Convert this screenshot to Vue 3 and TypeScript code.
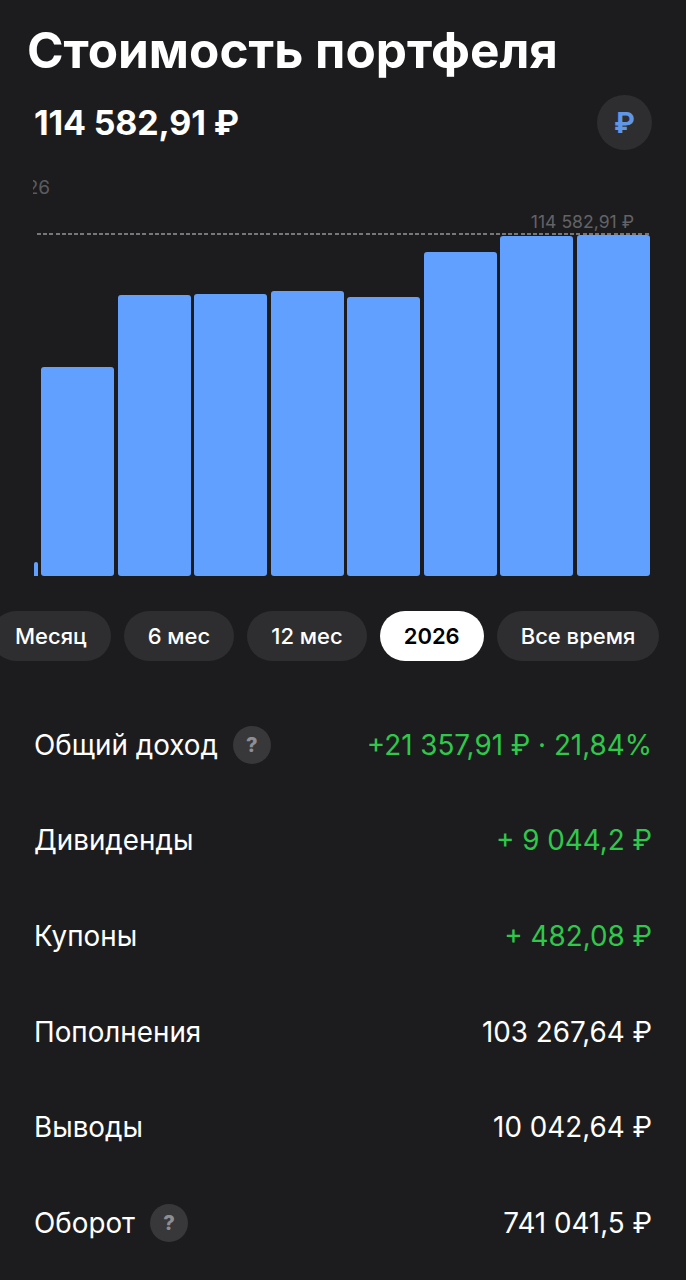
<script setup lang="ts">
const bars: number[] = [209.5, 281.5, 282.5, 285.5, 279.5, 324.5, 340.5, 341]
const pills: { label: string; active?: boolean }[] = [
  { label: 'Месяц' },
  { label: '6 мес' },
  { label: '12 мес' },
  { label: '2026', active: true },
  { label: 'Все время' },
]
const rows: { label: string; value: string; help?: boolean; green?: boolean }[] = [
  { label: 'Общий доход', value: '+21 357,91 ₽ · 21,84%', help: true, green: true },
  { label: 'Дивиденды', value: '+ 9 044,2 ₽', green: true },
  { label: 'Купоны', value: '+ 482,08 ₽', green: true },
  { label: 'Пополнения', value: '103 267,64 ₽' },
  { label: 'Выводы', value: '10 042,64 ₽' },
  { label: 'Оборот', value: '741 041,5 ₽', help: true },
]
</script>

<template>
  <div class="page">
    <h1 class="title">Стоимость портфеля</h1>
    <div class="summary">
      <span class="amount">114 582,91 ₽</span>
      <span class="currency">₽</span>
    </div>
    <div class="chart">
      <div class="axis"><span>26</span></div>
      <div class="max-label">114 582,91 ₽</div>
      <div class="plot">
        <div class="dash"></div>
        <div class="stub"></div>
        <div class="bars">
          <div v-for="(h, i) in bars" :key="i" class="bar" :style="{ height: h + 'px' }"></div>
        </div>
      </div>
    </div>
    <div class="pills">
      <div v-for="p in pills" :key="p.label" class="pill" :class="{ active: p.active }">{{ p.label }}</div>
    </div>
    <div class="rows">
      <div v-for="r in rows" :key="r.label" class="row">
        <div class="label">
          <span>{{ r.label }}</span>
          <span v-if="r.help" class="help">?</span>
        </div>
        <span class="value" :class="{ green: r.green }">{{ r.value }}</span>
      </div>
    </div>
  </div>
</template>

<style scoped>
.page {
  width: 686px;
  height: 1280px;
  overflow: hidden;
  background: #1c1c1e;
  color: #fff;
  font-family: Inter, "Noto Sans", sans-serif;
}
.title {
  margin: 0;
  padding: 22px 0 0 27px;
  font-size: 49.5px;
  line-height: 56px;
  font-weight: 700;
  white-space: nowrap;
}
.summary {
  display: flex;
  align-items: center;
  justify-content: space-between;
  margin-top: 17px;
  padding: 0 34px;
}
.amount {
  font-size: 34px;
  font-weight: 700;
  letter-spacing: -0.15px;
}
.currency {
  display: flex;
  align-items: center;
  justify-content: center;
  width: 55px;
  height: 55px;
  border-radius: 50%;
  background: #2e2e30;
  color: #5f96e8;
  font-size: 28px;
  font-weight: 700;
}
.chart {
  position: relative;
  margin-top: 25px;
  padding-top: 1px;
  height: 401px;
  box-sizing: border-box;
}
.axis {
  display: flex;
  justify-content: flex-end;
  width: 17px;
  margin-left: 33px;
  overflow: hidden;
  color: #5c5c5f;
  font-size: 19px;
  line-height: 24px;
}
.max-label {
  position: absolute;
  top: 36px;
  right: 52px;
  color: #636366;
  font-size: 17.6px;
  line-height: 22px;
}
.plot {
  position: absolute;
  left: 33px;
  right: 36px;
  bottom: 0;
  height: 342px;
}
.dash {
  position: absolute;
  top: -1px;
  left: 4px;
  right: 0;
  height: 1.5px;
  background: repeating-linear-gradient(90deg, #77777a 0 4px, transparent 4px 6.2px);
}
.stub {
  position: absolute;
  left: 1px;
  bottom: 0;
  width: 4px;
  height: 14px;
  border-radius: 3px 3px 0 0;
  background: #62a0ff;
}
.bars {
  position: absolute;
  left: 8px;
  right: 0;
  bottom: 0;
  display: flex;
  align-items: flex-end;
  gap: 3.6px;
}
.bar {
  flex: 1;
  border-radius: 3px;
  background: #62a0ff;
}
.pills {
  display: flex;
  gap: 13px;
  margin: 35px 0 0 -9px;
}
.pill {
  flex: none;
  display: flex;
  align-items: center;
  height: 50px;
  padding: 0 24px;
  border-radius: 25px;
  background: #2e2e30;
  font-size: 22px;
  font-weight: 500;
  white-space: nowrap;
}
.pill.active {
  background: #fff;
  color: #000;
  font-weight: 600;
}
.rows {
  margin-top: 36px;
  padding: 0 34px;
}
.row {
  display: flex;
  align-items: center;
  justify-content: space-between;
  height: 95.6px;
}
.label {
  display: flex;
  align-items: center;
  gap: 15px;
}
.label,
.value {
  font-size: 27.8px;
  font-weight: 400;
  white-space: nowrap;
}
.value.green {
  color: #2fc84a;
}
.help {
  display: flex;
  align-items: center;
  justify-content: center;
  width: 38px;
  height: 38px;
  border-radius: 50%;
  background: #38383b;
  color: #8e8e93;
  font-size: 20px;
  font-weight: 800;
}
</style>
